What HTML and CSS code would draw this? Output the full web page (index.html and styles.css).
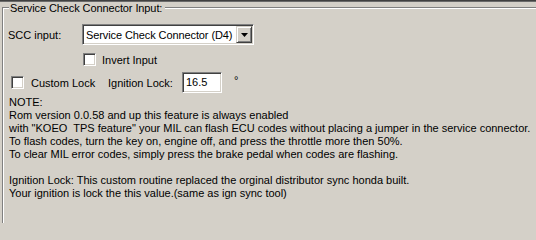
FILE: index.html
```html
<!DOCTYPE html>
<html>
<head>
<meta charset="utf-8">
<link rel="stylesheet" href="styles.css">
</head>
<body>
<div class="topbar"></div>
<div class="group">
  <div class="group-head">
    <span class="rule-short"></span>
    <span class="title">Service Check Connector Input:</span>
    <span class="rule-long"></span>
  </div>
  <div class="group-body">
    <div class="row row-scc">
      <span class="lbl-scc">SCC input:</span>
      <div class="combo">
        <span class="combo-text">Service Check Connector (D4)</span>
        <span class="combo-btn"><svg width="7" height="4" viewBox="0 0 7 4"><path d="M0 0h7L3.5 4z" fill="#000"/></svg></span>
      </div>
    </div>
    <div class="row row-invert">
      <span class="check"></span>
      <span class="check-lbl">Invert Input</span>
    </div>
    <div class="row row-lock">
      <span class="check check-lock"></span>
      <span class="check-lbl lbl-custom">Custom Lock</span>
      <span class="lbl-ign">Ignition Lock:</span>
      <span class="field">16.5</span>
      <span class="deg">°</span>
    </div>
    <div class="note">
      <div>NOTE:</div>
      <div>Rom version 0.0.58 and up this feature is always enabled</div>
      <div>with "KOEO&nbsp; TPS feature" your MIL can flash ECU codes without placing a jumper in the service connector.</div>
      <div>To flash codes, turn the key on, engine off, and press the throttle more then 50%.</div>
      <div>To clear MIL error codes, simply press the brake pedal when codes are flashing.</div>
      <div class="blank">&nbsp;</div>
      <div>Ignition Lock: This custom routine replaced the orginal distributor sync honda built.</div>
      <div>Your ignition is lock the this value.(same as ign sync tool)</div>
    </div>
  </div>
</div>
</body>
</html>
```
FILE: styles.css
```css
html, body {
  margin: 0;
  padding: 0;
  background: #d4d0c8;
  height: 100%;
  overflow: hidden;
}
body {
  font-family: "Liberation Sans", Arial, sans-serif;
  font-size: 11px;
  color: #000;
}
.topbar {
  height: 1px;
  border-top: 1px solid #404040;
  background: #6a6a6a;
}
.group {
  margin-left: 2px;
  height: 221px;
  display: flex;
  flex-direction: column;
}
.group-head {
  display: flex;
  height: 12px;
  align-items: flex-start;
}
.rule-short {
  margin-top: 5px;
  width: 6px;
  height: 6px;
  border-top: 1px solid #808080;
  border-left: 1px solid #808080;
  box-shadow: inset 1px 1px 0 #fff;
  flex: none;
}
.title {
  margin-left: 1px;
  padding-right: 3px;
  line-height: 12px;
  white-space: nowrap;
  letter-spacing: -0.1px;
}
.rule-long {
  flex: 1;
  margin-top: 5px;
  height: 0;
  border-top: 1px solid #808080;
  border-bottom: 1px solid #fff;
}
.group-body {
  flex: 1;
  border-left: 1px solid #808080;
  box-shadow: inset 1px 0 0 #fff;
  padding-left: 1px;
}
.row {
  display: flex;
  align-items: center;
}
.row-scc {
  margin-top: 10px;
  height: 21px;
}
.lbl-scc {
  margin-left: 4px;
  width: 74px;
  flex: none;
}
.combo {
  box-sizing: border-box;
  width: 172px;
  height: 21px;
  background: #fff;
  border: 1px solid;
  border-color: #808080 #fff #fff #808080;
  box-shadow: inset 1px 1px 0 #404040, inset -1px -1px 0 #d4d0c8;
  display: flex;
  align-items: center;
  flex: none;
}
.combo-text {
  padding-left: 3px;
  flex: 1;
  white-space: nowrap;
  overflow: hidden;
  letter-spacing: -0.1px;
}
.combo-btn {
  box-sizing: border-box;
  width: 16px;
  height: 17px;
  margin-right: 1px;
  background: #d4d0c8;
  border: 1px solid;
  border-color: #d4d0c8 #404040 #404040 #d4d0c8;
  box-shadow: inset 1px 1px 0 #fff, inset -1px -1px 0 #808080;
  display: flex;
  align-items: center;
  justify-content: center;
  flex: none;
}
.combo-btn svg {
  display: block;
}
.check {
  box-sizing: border-box;
  width: 13px;
  height: 13px;
  background: #fff;
  border: 1px solid;
  border-color: #808080 #fff #fff #808080;
  box-shadow: inset 1px 1px 0 #404040, inset -1px -1px 0 #d4d0c8;
  flex: none;
}
.row-invert {
  margin-top: 8px;
  height: 13px;
}
.row-invert .check {
  margin-left: 79px;
}
.check-lbl {
  margin-left: 6px;
  white-space: nowrap;
}
.row-lock {
  margin-top: 6px;
  height: 21px;
}
.check-lock {
  margin-left: 7px;
}
.lbl-custom {
  margin-left: 7px;
  width: 77px;
}
.lbl-ign {
  width: 74px;
  white-space: nowrap;
}
.field {
  box-sizing: border-box;
  width: 40px;
  height: 21px;
  line-height: 19px;
  background: #fff;
  border: 1px solid;
  border-color: #808080 #fff #fff #808080;
  box-shadow: inset 1px 1px 0 #404040, inset -1px -1px 0 #d4d0c8;
  padding-left: 3px;
  flex: none;
}
.deg {
  margin-left: 12px;
  align-self: flex-start;
  margin-top: 2px;
}
.note {
  margin-top: 3px;
  margin-left: 5px;
  line-height: 13px;
  white-space: nowrap;
}
.blank {
  height: 13px;
}
```
